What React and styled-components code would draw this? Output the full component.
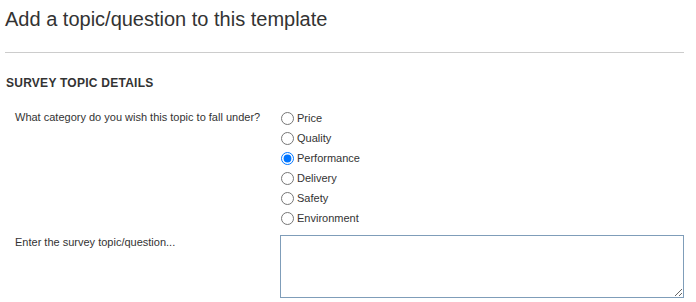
import React, { useState } from 'react';
import styled, { createGlobalStyle } from 'styled-components';

const GlobalStyle = createGlobalStyle`
    body {
        margin: 0;
        background: #fff;
        font-family: "Liberation Sans", Arial, sans-serif;
        color: #333;
    }
`

const Page = styled.div`
    padding: 8px 12px 0 5px;
`

const Title = styled.h2`
    margin: 0;
    font-size: 20px;
    line-height: 23px;
    font-weight: normal;
    color: #333;
`

const Divider = styled.hr`
    margin: 21px 0 0 0;
    border: none;
    border-top: 1px solid #ccc;
    height: 0;
`

const SectionHeader = styled.h3`
    margin: 23px 0 0 1px;
    font-size: 12px;
    line-height: 14px;
    letter-spacing: 0.25px;
    font-weight: bold;
    color: #333;
`

const FormGrid = styled.div`
    display: grid;
    grid-template-columns: 265px 404px;
    row-gap: 6px;
    margin-top: 19px;
    padding-left: 10px;
`

const FieldLabel = styled.label`
    font-size: 11px;
    line-height: 13px;
    padding-top: ${props => props.$offset || 0}px;
`

const RadioList = styled.div`
    display: flex;
    flex-direction: column;
`

const RadioRow = styled.label`
    display: flex;
    align-items: flex-start;
    height: 20px;
    font-size: 11px;
    line-height: 13px;
`

const Radio = styled.input`
    width: 13px;
    height: 13px;
    margin: 3px 3px 0 1px;
    flex-shrink: 0;
`

const RadioText = styled.span`
    padding-top: 3px;
`

const TopicInput = styled.textarea`
    box-sizing: border-box;
    width: 404px;
    height: 63px;
    border: 1px solid #7f9db9;
    font-family: "Liberation Sans", Arial, sans-serif;
    font-size: 11px;
    padding: 2px;
    resize: both;

    &:focus{
        outline: none;
    }
`

const categories = ['Price', 'Quality', 'Performance', 'Delivery', 'Safety', 'Environment'];

function App(){
    const [category, setCategory] = useState('Performance');
    const [topic, setTopic] = useState('');

    return (
        <Page>
            <GlobalStyle />
            <Title>Add a topic/question to this template</Title>
            <Divider />
            <SectionHeader>SURVEY TOPIC DETAILS</SectionHeader>
            <FormGrid>
                <FieldLabel $offset={2}>What category do you wish this topic to fall under?</FieldLabel>
                <RadioList>
                    {categories.map(c => (
                        <RadioRow key={c}>
                            <Radio type='radio'
                                name='category'
                                value={c}
                                checked={category === c}
                                onChange={() => setCategory(c)} />
                            <RadioText>{c}</RadioText>
                        </RadioRow>
                    ))}
                </RadioList>
                <FieldLabel $offset={1}>Enter the survey topic/question...</FieldLabel>
                <TopicInput value={topic} onChange={e => setTopic(e.target.value)} />
            </FormGrid>
        </Page>
    )
}

export default App;
